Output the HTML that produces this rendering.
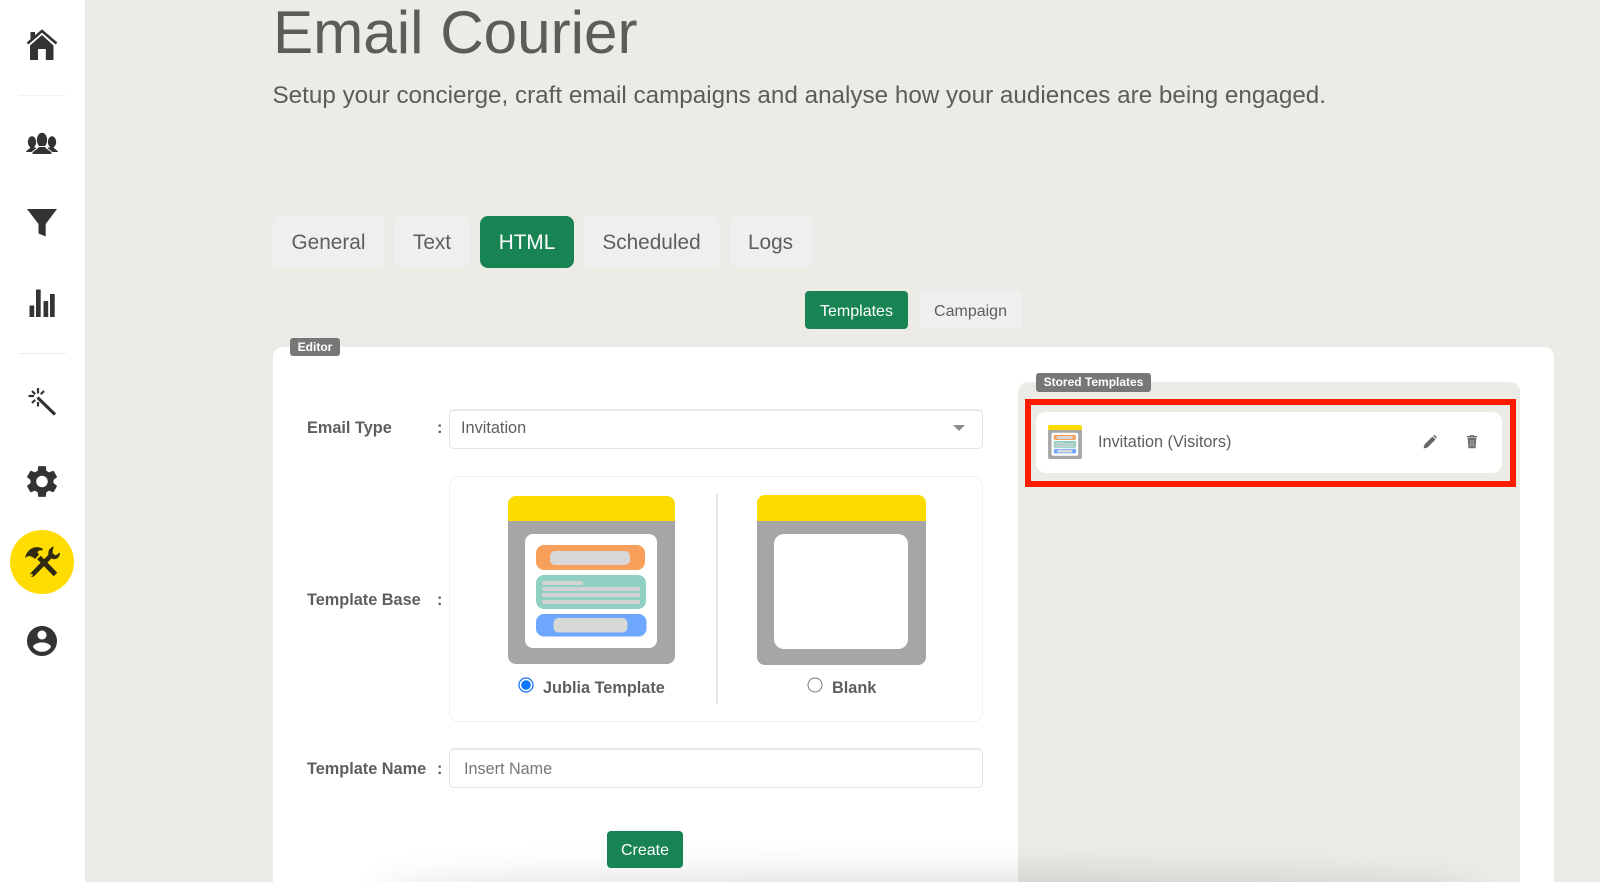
<!DOCTYPE html>
<html lang="en">
<head>
<meta charset="utf-8">
<title>Email Courier</title>
<style>
html,body{margin:0;padding:0;width:1600px;height:882px;overflow:hidden;background:#ecebe6;font-family:"Liberation Sans",sans-serif;color:#5e5e5e}
#page{position:relative;width:1600px;height:882px;overflow:hidden;background:#ecebe6;filter:blur(.35px)}
.a{position:absolute;box-sizing:border-box}
.t{position:absolute;white-space:nowrap;line-height:40px;height:40px}
.btn{position:absolute;box-sizing:border-box;text-align:center;background:#efefef;border-radius:8px;color:#5e5e5e}
.on{background:#188454;color:#fff}
.badge{position:absolute;box-sizing:border-box;background:#777;color:#fff;font-weight:700;font-size:12px;text-align:center;border-radius:3px}
.b{font-weight:700;font-size:16.3px}
.field{position:absolute;box-sizing:border-box;background:#fff;border:1px solid #e2e2e0;border-top:2px solid #e8e8e6;border-radius:5px}
</style>
</head>
<body>
<div id="page">
  <div class="a" style="left:0;top:0;width:85px;height:882px;background:#fff"></div>

  <svg class="a" style="left:0;top:0" width="85" height="882" viewBox="0 0 85 882" fill="#333">
    <!-- home -->
    <path d="M27.500 43.500 42 31 56.500 43.500" fill="none" stroke="#333" stroke-width="2.600"/>
    <path d="M30.500 32h4.500v5l-4.500 4z"/>
    <path d="M30 45.500 42 35 53.500 45.500V60H45.800V49H38V60H30z"/>
    <rect x="19" y="95" width="47" height="1" fill="#f3f2ee"/>
    <!-- people -->
    <ellipse cx="32" cy="142" rx="4.200" ry="5.700"/>
    <ellipse cx="52" cy="142" rx="4.200" ry="5.700"/>
    <path d="M26 152c.4-2 4-3 4.500-5h3l3 1-2 4z"/>
    <path d="M58 152c-.4-2-4-3-4.500-5h-3l-3 1 2 4z"/>
    <ellipse cx="42" cy="140" rx="5.600" ry="7.800" stroke="#fff" stroke-width="1"/>
    <path d="M32 154.500v-1.500c.4-2.800 5.500-3.500 6.500-6.500h7c1 3 6.100 3.700 6.500 6.500v1.500z" stroke="#fff" stroke-width="1"/>
    <!-- funnel -->
    <path d="M27 209H57L45.700 224V236.500L38.500 233.500V224z"/>
    <!-- bars -->
    <rect x="29.500" y="305.500" width="4.700" height="11.500"/>
    <rect x="36" y="289.500" width="4.700" height="27.500"/>
    <rect x="43.500" y="301" width="4.700" height="16"/>
    <rect x="50" y="294" width="4.700" height="23"/>
    <rect x="19" y="353" width="47" height="1" fill="#ecebe8"/>
    <!-- wand -->
    <path d="M37.500 397.500 55 414.500" stroke="#333" stroke-width="3.200" fill="none"/>
    <path d="M38 388v5.500M38 402v4.500M28.500 396h5.500M32 391l3.200 3.200M44 391l-3.200 3.200M32 403l3.200-3.200" stroke="#333" stroke-width="2.200" fill="none"/>
    <!-- gear -->
    <g transform="translate(22.800 462.300) scale(1.600)">
      <path d="M19.140 12.940c.04-.3.06-.61.06-.94 0-.32-.02-.64-.07-.94l2.030-1.580c.18-.14.23-.41.12-.61l-1.920-3.320c-.12-.22-.37-.29-.59-.22l-2.390.96c-.5-.38-1.030-.7-1.620-.94l-.36-2.540c-.04-.24-.24-.41-.48-.41h-3.840c-.24 0-.43.17-.47.41l-.36 2.540c-.59.24-1.130.57-1.620.94l-2.390-.96c-.22-.08-.47 0-.59.22L2.740 8.870c-.12.21-.08.47.12.61l2.030 1.580c-.05.3-.09.63-.09.94s.02.64.07.94l-2.030 1.580c-.18.14-.23.41-.12.61l1.920 3.320c.12.22.37.29.59.22l2.390-.96c.5.38 1.030.7 1.620.94l.36 2.540c.05.24.24.41.48.41h3.840c.24 0 .44-.17.47-.41l.36-2.540c.59-.24 1.130-.56 1.620-.94l2.390.96c.22.08.47 0 .59-.22l1.920-3.320c.12-.22.07-.47-.12-.61l-2.010-1.580zM12 15.600c-1.980 0-3.600-1.620-3.600-3.600s1.620-3.600 3.600-3.600 3.600 1.620 3.600 3.600-1.620 3.600-3.600 3.600z"/>
    </g>
    <!-- tools -->
    <circle cx="42" cy="562" r="32" fill="#ffdd00"/>
    <path d="M39 557.500 55.500 574.500" stroke="#2f2a10" stroke-width="5" fill="none"/>
    <path d="M25 558c1-5 4-9 9-10.500 3-.8 6-.5 9 1.500l-1 1.500c-2-.5-4 0-4.500 2l1.500 2-4 4.500-2.500-2c-3-1.500-5.500-1-7.500 1z" fill="#2f2a10"/>
    <path d="M32.500 574.500 50.500 556" stroke="#2f2a10" stroke-width="4.800" fill="none" stroke-linecap="round"/>
    <path d="M54 546.500c-4 .8-6.500 4.500-5.500 8.500l4 4c4 1 7.500-1.800 7.500-6.500l-4.500 3-3-2.500 .5-4z" fill="#2f2a10"/>
    <circle cx="31.500" cy="575" r="1.200" fill="#ffdd00"/>
    <!-- account -->
    <g transform="translate(24 623) scale(1.500)">
      <path d="M12 2C6.480 2 2 6.480 2 12s4.480 10 10 10 10-4.480 10-10S17.520 2 12 2zm0 3c1.660 0 3 1.340 3 3s-1.340 3-3 3-3-1.340-3-3 1.340-3 3-3zm0 14.200c-2.500 0-4.710-1.280-6-3.220.03-1.990 4-3.080 6-3.080 1.990 0 5.970 1.090 6 3.080-1.290 1.940-3.500 3.220-6 3.220z"/>
    </g>
  </svg>

  <!-- Header -->
  <div class="t" style="left:273px;top:13.400px;font-size:60.200px;color:#5c5c5a">Email Courier</div>
  <div class="t" style="left:272.500px;top:76px;font-size:24.240px;color:#5c5c5a">Setup your concierge, craft email campaigns and analyse how your audiences are being engaged.</div>

  <!-- Tabs -->
  <div class="btn" style="left:272px;top:216px;width:113px;height:52px;line-height:54px;font-size:20.800px">General</div>
  <div class="btn" style="left:394px;top:216px;width:76px;height:52px;line-height:54px;font-size:20.800px">Text</div>
  <div class="btn on" style="left:480px;top:216px;width:94px;height:52px;line-height:54px;font-size:20.800px">HTML</div>
  <div class="btn" style="left:583px;top:216px;width:137px;height:52px;line-height:54px;font-size:20.800px">Scheduled</div>
  <div class="btn" style="left:730px;top:216px;width:83px;height:52px;line-height:54px;font-size:20.800px;padding-right:2px">Logs</div>

  <div class="btn on" style="left:805px;top:291px;width:103px;height:38px;line-height:41px;font-size:16px;border-radius:4px">Templates</div>
  <div class="btn" style="left:919px;top:291px;width:103px;height:38px;line-height:41px;font-size:16px;border-radius:4px">Campaign</div>

  <!-- Card -->
  <div class="a" style="left:273px;top:347px;width:1281px;height:560px;background:#fff;border-radius:10px"></div>
  <div class="badge" style="left:290px;top:338px;width:50px;height:18px;line-height:18px">Editor</div>

  <!-- Form -->
  <div class="t b" style="left:307px;top:408px">Email Type</div>
  <div class="t b" style="left:437px;top:408px">:</div>
  <div class="field" style="left:449px;top:409px;width:534px;height:40px"></div>
  <div class="t" style="left:461px;top:408px;font-size:16.300px">Invitation</div>
  <svg class="a" style="left:953px;top:425px" width="12" height="6"><path d="M0 0H12L6 6z" fill="#8c8c8c"/></svg>

  <div class="t b" style="left:307px;top:580px">Template Base</div>
  <div class="t b" style="left:437px;top:580px">:</div>
  <div class="a" style="left:449px;top:476px;width:534px;height:246px;border:1px solid #efefef;border-radius:10px"></div>
  <div class="a" style="left:716px;top:494px;width:2px;height:210px;background:#e6e6e6"></div>

  <svg class="a" style="left:0;top:0" width="1600" height="882" viewBox="0 0 1600 882">
    <defs>
      <symbol id="tpl" viewBox="508 496 167 168">
        <path d="M508 521H675V656a8 8 0 0 1-8 8H516a8 8 0 0 1-8-8z" fill="#a6a6a6"/>
        <path d="M508 521V504a8 8 0 0 1 8-8H667a8 8 0 0 1 8 8V521z" fill="#fcdc00"/>
        <rect x="525" y="534" width="132" height="114" rx="8" fill="#fff"/>
        <rect x="536" y="545" width="109" height="25" rx="8" fill="#f89f5b"/>
        <rect x="550" y="551" width="80" height="14" rx="5" fill="#d8d8d8"/>
        <rect x="536" y="575" width="110" height="34" rx="8" fill="#90d0c2"/>
        <rect x="542" y="581" width="41" height="4" rx="2" fill="#d2d2d2"/>
        <rect x="542" y="587" width="98" height="4" rx="2" fill="#d2d2d2"/>
        <rect x="542" y="593" width="98" height="4" rx="2" fill="#d2d2d2"/>
        <rect x="542" y="600" width="98" height="4" rx="2" fill="#d2d2d2"/>
        <rect x="536" y="614" width="110.500" height="22.500" rx="8" fill="#6ea7ff"/>
        <rect x="553.500" y="618" width="74" height="14.500" rx="5" fill="#d8d8d8"/>
      </symbol>
    </defs>
    <use href="#tpl" x="508" y="496" width="167" height="168"/>
    <path d="M757 521H926V657a8 8 0 0 1-8 8H765a8 8 0 0 1-8-8z" fill="#a6a6a6"/>
    <path d="M757 521V503a8 8 0 0 1 8-8H918a8 8 0 0 1 8 8V521z" fill="#fcdc00"/>
    <rect x="774" y="534" width="134" height="115" rx="10" fill="#fff"/>
    <!-- radios -->
    <circle cx="526" cy="685" r="7" fill="#fff" stroke="#1b76f0" stroke-width="1.300"/>
    <circle cx="526" cy="685" r="4.800" fill="#0b76ff"/>
    <circle cx="815" cy="685" r="7" fill="#fff" stroke="#777" stroke-width="1"/>
  </svg>
  <div class="t b" style="left:543px;top:667.500px">Jublia Template</div>
  <div class="t b" style="left:832px;top:667.500px">Blank</div>

  <div class="t b" style="left:307px;top:748.500px">Template Name</div>
  <div class="t b" style="left:437px;top:748.500px">:</div>
  <div class="field" style="left:449px;top:748px;width:534px;height:40px"></div>
  <div class="t" style="left:464px;top:748.500px;font-size:16.200px;color:#777">Insert Name</div>

  <!-- Stored templates -->
  <div class="a" style="left:1018px;top:382px;width:502px;height:520px;background:#ecebe6;border-radius:10px 10px 0 0"></div>
  <div class="badge" style="left:1036px;top:373px;width:115px;height:19px;line-height:18px">Stored Templates</div>
  <div class="a" style="left:1025px;top:399px;width:491px;height:88px;border:6px solid #fb1c00"></div>
  <div class="a" style="left:1036px;top:412px;width:466px;height:61px;background:#fff;border-radius:10px"></div>
  <svg class="a" style="left:1047.500px;top:425px" width="34" height="34"><use href="#tpl" x="0" y="0" width="34" height="34"/></svg>
  <div class="t" style="left:1098px;top:421.500px;font-size:16.250px">Invitation (Visitors)</div>
  <svg class="a" style="left:1420px;top:432px" width="20" height="20" viewBox="0 0 20 20" fill="#666">
    <path d="M3.500 16.500 4.500 12.500 12.500 4.500 15.500 7.500 7.500 15.500z"/>
    <path d="M13.300 3.800 14.500 2.800 16.800 5.200 16.200 6.700z"/>
  </svg>
  <svg class="a" style="left:1462px;top:432px" width="20" height="20" viewBox="0 0 20 20" fill="#6a6a6a">
    <rect x="5" y="4" width="10" height="1.500"/>
    <rect x="8" y="3.200" width="4" height="1.300"/>
    <path d="M5.700 6H14.300L13.500 16.300H6.500z"/>
    <path d="M8.200 8V14.800M10 8V14.800M11.800 8V14.800" stroke="#bdbdbd" stroke-width=".7"/>
  </svg>

  <!-- bottom shadow -->
  <div class="a" style="left:400px;top:896px;width:1060px;height:14px;border-radius:50%;box-shadow:0 0 40px 20px rgba(0,0,0,.14)"></div>

  <div class="btn on" style="left:607px;top:831px;width:76px;height:37px;line-height:40px;font-size:16px;border-radius:4px">Create</div>
</div>
</body>
</html>
